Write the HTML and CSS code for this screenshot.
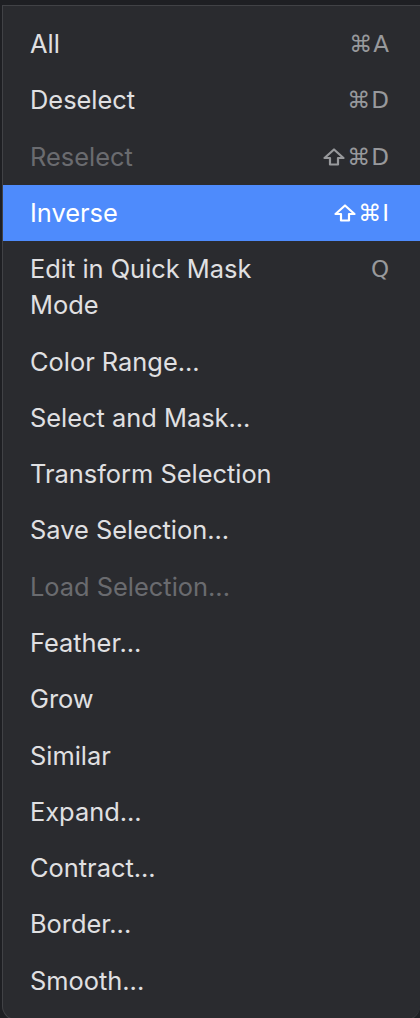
FILE: index.html
```html
<!DOCTYPE html>
<html>
<head>
<meta charset="utf-8">
<link rel="stylesheet" href="styles.css">
</head>
<body>
<div class="menu">
  <div class="item"><span class="label">All</span><span class="key">⌘A</span></div>
  <div class="item"><span class="label">Deselect</span><span class="key">⌘D</span></div>
  <div class="item disabled"><span class="label">Reselect</span><span class="key"><svg class="shift" viewBox="0 0 22 18"><path d="M11 1.5 L20.5 10 H15 V16.5 H7 V10 H1.5 Z"/></svg>⌘D</span></div>
  <div class="item active"><span class="label">Inverse</span><span class="key"><svg class="shift" viewBox="0 0 22 18"><path d="M11 1.5 L20.5 10 H15 V16.5 H7 V10 H1.5 Z"/></svg>⌘I</span></div>
  <div class="item"><span class="label">Edit in Quick Mask<br>Mode</span><span class="key">Q</span></div>
  <div class="item"><span class="label">Color Range...</span></div>
  <div class="item"><span class="label">Select and Mask...</span></div>
  <div class="item"><span class="label">Transform Selection</span></div>
  <div class="item"><span class="label">Save Selection...</span></div>
  <div class="item disabled"><span class="label">Load Selection...</span></div>
  <div class="item"><span class="label">Feather...</span></div>
  <div class="item"><span class="label">Grow</span></div>
  <div class="item"><span class="label">Similar</span></div>
  <div class="item"><span class="label">Expand...</span></div>
  <div class="item"><span class="label">Contract...</span></div>
  <div class="item"><span class="label">Border...</span></div>
  <div class="item"><span class="label">Smooth...</span></div>
</div>
</body>
</html>
```
FILE: styles.css
```css
html, body {
  margin: 0;
  padding: 0;
  background: #1e1f23;
  height: 1018px;
  overflow: hidden;
}
.menu {
  margin: 5px 0 0 2px;
  background: #2a2b2f;
  border-top: 1px solid #414246;
  border-left: 1px solid #414246;
  border-bottom: 1px solid #414246;
  border-radius: 0 0 14px 14px;
  padding: 10px 0 10px 0;
  font-family: Inter, "Noto Sans", sans-serif;
  font-size: 25.4px;
  color: #e0e0e2;
  display: flex;
  flex-direction: column;
}
.item {
  display: flex;
  justify-content: space-between;
  align-items: flex-start;
  padding: 10.15px 30px 10.15px 27px;
  line-height: 36px;
}
.item.disabled {
  color: #6a6b6f;
}
.item.active {
  background: #4e8bfc;
  color: #ffffff;
}
.key {
  display: flex;
  align-items: center;
  height: 36px;
  color: #98999c;
  font-family: "DejaVu Sans", Inter, sans-serif;
  font-size: 23px;
  letter-spacing: 1px;
}
.shift {
  width: 22px;
  height: 18px;
  margin-right: 2px;
  fill: none;
  stroke: currentColor;
  stroke-width: 2.2;
  stroke-linejoin: round;
}
.item.active .key {
  color: #ffffff;
}
```
